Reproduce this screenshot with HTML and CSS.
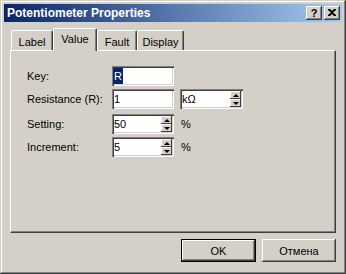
FILE: index.html
```html
<!DOCTYPE html>
<html lang="en">
<head>
    <meta charset="UTF-8">
    <meta name="viewport" content="width=device-width, initial-scale=1.0">
    <title>Potentiometer Properties</title>
    <link rel="stylesheet" href="styles.css">
</head>
<body>
    <div class="dialog">
        <div class="titlebar">
            <span class="title">Potentiometer Properties</span>
            <div class="caption-btns">
                <div class="cap-btn help">?</div>
                <div class="cap-btn close">
                    <svg width="8" height="7" viewBox="0 0 8 7">
                        <path d="M0 0h2l2 2 2-2h2v1L5 3.5 8 6v1H6L4 5 2 7H0V6l3-2.5L0 1z" fill="#000"/>
                    </svg>
                </div>
            </div>
        </div>

        <div class="content">
            <div class="tabs">
                <div class="tab tab-label">Label</div>
                <div class="tab tab-value active">Value</div>
                <div class="tab tab-fault">Fault</div>
                <div class="tab tab-display">Display</div>
            </div>

            <div class="panel">
                <div class="row">
                    <span class="lbl">Key:</span>
                    <div class="field"><span class="val"><span class="sel">R</span></span></div>
                </div>
                <div class="row row-res">
                    <span class="lbl">Resistance (R):</span>
                    <div class="field"><span class="val">1</span></div>
                    <div class="field unit">
                        <span class="val">kΩ</span>
                        <div class="spin">
                            <div class="spin-btn"><span class="arrow up"></span></div>
                            <div class="spin-btn"><span class="arrow down"></span></div>
                        </div>
                    </div>
                </div>
                <div class="row row-set">
                    <span class="lbl">Setting:</span>
                    <div class="field">
                        <span class="val">50</span>
                        <div class="spin">
                            <div class="spin-btn"><span class="arrow up"></span></div>
                            <div class="spin-btn"><span class="arrow down"></span></div>
                        </div>
                    </div>
                    <span class="pct">%</span>
                </div>
                <div class="row row-inc">
                    <span class="lbl">Increment:</span>
                    <div class="field">
                        <span class="val">5</span>
                        <div class="spin">
                            <div class="spin-btn"><span class="arrow up"></span></div>
                            <div class="spin-btn"><span class="arrow down"></span></div>
                        </div>
                    </div>
                    <span class="pct">%</span>
                </div>
            </div>

            <div class="actions">
                <div class="btn btn-default">OK</div>
                <div class="btn btn-cancel">Отмена</div>
            </div>
        </div>
    </div>
</body>
</html>
```

FILE: styles.css
```css
body {
    margin: 0;
    font-family: 'Liberation Sans', Arial, sans-serif;
    font-size: 11px;
    color: #000;
    background: #d4d0c8;
}
.dialog {
    width: 346px;
    height: 274px;
    box-sizing: border-box;
    padding: 4px;
    background: #d4d0c8;
    box-shadow: inset -1px -1px #404040, inset 1px 1px #d4d0c8,
                inset -2px -2px #808080, inset 2px 2px #fff;
}
.titlebar {
    height: 18px;
    display: flex;
    align-items: center;
    justify-content: space-between;
    padding: 0 2px 0 3px;
    background: linear-gradient(to right, #0a246a, #a6caf0);
}
.title {
    color: #fff;
    font-weight: bold;
    font-size: 12px;
}
.caption-btns {
    display: flex;
    gap: 2px;
}
.cap-btn {
    width: 16px;
    height: 14px;
    box-sizing: border-box;
    background: #d4d0c8;
    display: flex;
    align-items: center;
    justify-content: center;
    box-shadow: inset -1px -1px #404040, inset 1px 1px #fff,
                inset -2px -2px #808080, inset 2px 2px #d4d0c8;
}
.help {
    font-weight: bold;
    font-size: 11px;
    line-height: 14px;
    padding-bottom: 1px;
}
.close svg {
    display: block;
    margin-top: -1px;
}
.content {
    padding: 0 6px;
}
.tabs {
    display: flex;
    align-items: flex-end;
    height: 22px;
    margin-top: 6px;
    padding-left: 1px;
}
.tab {
    height: 20px;
    box-sizing: border-box;
    border-top: 1px solid #fff;
    border-left: 1px solid #fff;
    border-right: 1px solid #404040;
    border-radius: 2px 2px 0 0;
    box-shadow: inset -1px 0 #808080;
    text-align: center;
    padding-top: 5px;
    line-height: 13px;
}
.tab-label { width: 42px; }
.tab-value { width: 44px; }
.tab-fault { width: 40px; }
.tab-display { width: 47px; }
.tab.active {
    height: 23px;
    margin-bottom: -1px;
    padding-top: 4px;
    background: #d4d0c8;
    position: relative;
    z-index: 1;
}
.panel {
    height: 183px;
    box-sizing: border-box;
    border-top: 1px solid #fff;
    border-left: 1px solid #fff;
    border-right: 1px solid #404040;
    border-bottom: 1px solid #404040;
    box-shadow: inset -1px -1px #808080;
    padding: 15px 0 0 16px;
}
.row {
    display: flex;
    align-items: center;
    height: 20px;
}
.row-res { margin-top: 3px; }
.row-set { margin-top: 5px; }
.row-inc { margin-top: 3px; }
.lbl {
    width: 85px;
}
.field {
    width: 62px;
    height: 20px;
    box-sizing: border-box;
    background: #fff;
    display: flex;
    align-items: stretch;
    box-shadow: inset 1px 1px #808080, inset 2px 2px #404040,
                inset -1px -1px #fff, inset -2px -2px #d4d0c8;
}
.val {
    flex: 1;
    display: flex;
    align-items: center;
    padding: 2px 0 2px 2px;
    line-height: 16px;
}
.sel {
    background: #0a246a;
    color: #fff;
    padding: 0 1px 0 1px;
    margin-left: -1px;
}
.unit {
    width: 63px;
    margin-left: 6px;
}
.spin {
    width: 11px;
    margin: 2px 2px 2px 0;
    display: flex;
    flex-direction: column;
}
.spin-btn {
    flex: 1;
    background: #d4d0c8;
    display: flex;
    align-items: center;
    justify-content: center;
    box-shadow: inset -1px -1px #404040, inset 1px 1px #fff;
}
.arrow {
    width: 0;
    height: 0;
    border-left: 3px solid transparent;
    border-right: 3px solid transparent;
}
.arrow.up {
    border-bottom: 3px solid #000;
}
.arrow.down {
    border-top: 3px solid #000;
}
.pct {
    margin-left: 7px;
}
.actions {
    display: flex;
    justify-content: flex-end;
    gap: 6px;
    margin-top: 6px;
}
.btn {
    width: 75px;
    height: 23px;
    box-sizing: border-box;
    display: flex;
    align-items: center;
    justify-content: center;
    background: #d4d0c8;
    box-shadow: inset -1px -1px #404040, inset 1px 1px #fff,
                inset -2px -2px #808080, inset 2px 2px #d4d0c8;
}
.btn-cancel {
    width: 74px;
}
.btn-default {
    border: 1px solid #000;
    box-shadow: inset -1px -1px #404040, inset 1px 1px #fff,
                inset -2px -2px #808080;
}
```
